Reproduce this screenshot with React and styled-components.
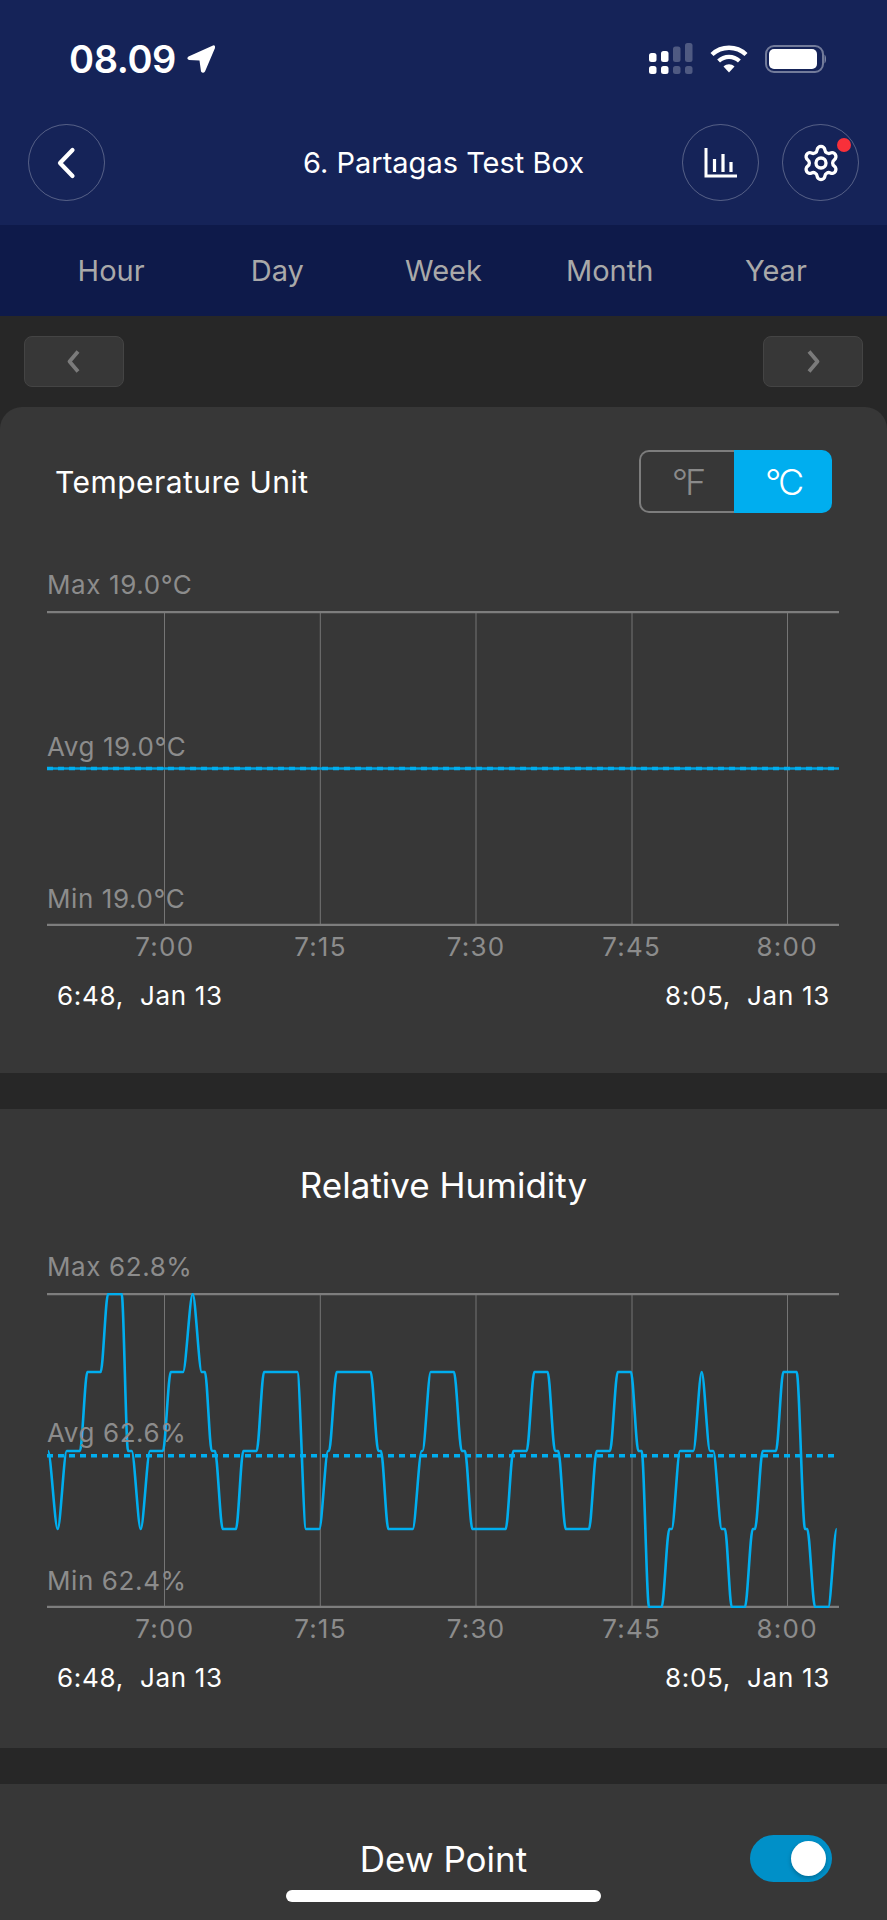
import React from "react"
import styled, { createGlobalStyle } from "styled-components"
import { Settings } from "lucide-react"

const GlobalStyle = createGlobalStyle`
html, body {
  margin: 0;
  background: #272727;
}
* { box-sizing: border-box; }
`

const Page = styled.div`
  position: relative;
  width: 887px;
  height: 1920px;
  overflow: hidden;
  background: #272727;
  color: #fff;
  font-family: Inter, "Noto Sans", sans-serif;
`

const Header = styled.header`
  background: #152358;
`

const StatusBar = styled.div`
  height: 118px;
  display: flex;
  align-items: center;
  justify-content: space-between;
  padding: 0 60px 0 69px;
`

const Clock = styled.div`
  display: flex;
  align-items: center;
  gap: 10px;
  font-size: 38px;
  font-weight: 600;
  letter-spacing: -0.4px;
`

const StatusIcons = styled.div`
  display: flex;
  align-items: center;
  gap: 17px;
`

const TitleRow = styled.div`
  display: grid;
  grid-template-columns: 1fr auto 1fr;
  align-items: center;
  padding: 6px 28px 24px;
`

const Title = styled.h1`
  margin: 0;
  font-size: 29px;
  font-weight: 400;
`

const RoundGroup = styled.div`
  display: flex;
  justify-content: flex-end;
  gap: 23px;
`

const RoundBtn = styled.button`
  position: relative;
  width: 77px;
  height: 77px;
  padding: 0;
  display: flex;
  align-items: center;
  justify-content: center;
  color: #fff;
  background: transparent;
  border: 1.5px solid rgba(255, 255, 255, 0.28);
  border-radius: 50%;
`

const RedDot = styled.span`
  position: absolute;
  top: 13px;
  right: 7px;
  width: 14px;
  height: 14px;
  border-radius: 50%;
  background: #f8303a;
`

const Tabs = styled.nav`
  height: 91px;
  display: grid;
  grid-template-columns: repeat(5, 1fr);
  align-items: center;
  padding: 0 28px;
  background: #0e1a4a;
`

const Tab = styled.div`
  text-align: center;
  font-size: 29px;
  color: #a9a9a9;
`

const Pager = styled.div`
  display: flex;
  justify-content: space-between;
  padding: 20px 24px;
`

const PagerBtn = styled.button`
  width: 100px;
  height: 51px;
  padding: 0;
  display: flex;
  align-items: center;
  justify-content: center;
  color: #7b7b7b;
  background: #373737;
  border: 1px solid #444;
  border-radius: 8px;
`

const Card = styled.section`
  background: #373737;
  padding: ${(p) => p.$pad};
  border-radius: ${(p) => (p.$rounded ? "22px 22px 0 0" : "0")};
  margin-bottom: 36px;
`

const CardHead = styled.div`
  display: flex;
  align-items: center;
  justify-content: space-between;
  height: 63px;
  padding: 0 55px;
`

const HeadText = styled.div`
  font-size: 30px;
  letter-spacing: 0.45px;
`

const UnitSwitch = styled.div`
  width: 193px;
  height: 63px;
  display: flex;
`

const UnitOption = styled.div`
  display: flex;
  align-items: center;
  justify-content: center;
  flex: ${(p) => (p.$on ? "1" : "0 0 95px")};
  font-size: 36px;
  font-weight: 300;
  letter-spacing: -3px;
  color: ${(p) => (p.$on ? "#fff" : "#8a8a8a")};
  background: ${(p) => (p.$on ? "#00aeef" : "transparent")};
  border: ${(p) => (p.$on ? "0" : "2px solid #7d7d7d")};
  border-right: 0;
  border-radius: ${(p) => (p.$on ? "0 10px 10px 0" : "10px 0 0 10px")};
`

const CenterTitle = styled.h2`
  margin: 0;
  text-align: center;
  font-size: 35px;
  font-weight: 400;
  line-height: 40px;
`

const ChartBlock = styled.div`
  margin: ${(p) => p.$top} 48px 0 47px;
`

const MaxLabel = styled.div`
  height: 41px;
  font-size: 26px;
  letter-spacing: 0.6px;
  line-height: 30px;
  color: #8c8c8c;
`

const Plot = styled.div`
  position: relative;
  height: 315px;

  svg {
    display: block;
  }
`

const PlotLabel = styled.span`
  position: absolute;
  left: 0;
  top: ${(p) => p.$y}px;
  font-size: 26px;
  letter-spacing: 0.6px;
  line-height: 30px;
  color: #8c8c8c;
`

const TimeAxis = styled.div`
  display: flex;
  margin-top: 6px;
  padding-left: 40px;
`

const TimeTick = styled.div`
  flex: none;
  width: 155.6px;
  text-align: center;
  font-size: 26px;
  letter-spacing: 1.2px;
  line-height: 30px;
  color: #8c8c8c;
`

const DateRow = styled.div`
  display: flex;
  justify-content: space-between;
  margin-top: 19px;
  padding: 0 9px 0 10px;
  font-size: 26px;
  letter-spacing: 0.7px;
  line-height: 30px;
  white-space: pre;
`

const DewRow = styled.div`
  display: grid;
  grid-template-columns: 1fr auto 1fr;
  align-items: center;
  padding: 0 55px;
`

const Switch = styled.div`
  justify-self: end;
  width: 82px;
  height: 47px;
  display: flex;
  align-items: center;
  justify-content: flex-end;
  padding-right: 6px;
  background: #0090c8;
  border-radius: 24px;
`

const Knob = styled.span`
  width: 35px;
  height: 35px;
  border-radius: 50%;
  background: #fff;
  box-shadow: 0 2px 4px rgba(0, 0, 0, 0.25);
`

const HomeBar = styled.div`
  position: absolute;
  left: 286px;
  top: 1890px;
  width: 315px;
  height: 12px;
  border-radius: 6px;
  background: #fff;
`

const GRID_X = [117.5, 273.3, 429, 585, 740.5]
const TIMES = ["7:00", "7:15", "7:30", "7:45", "8:00"]

// wave levels, y inside the plot
const L = [1, 79, 158, 236, 314]

// [x on the page, level]
const HUMIDITY = [
  [48, 2], [57.7, 3], [66.7, 2], [80, 2], [87.3, 1], [100.7, 1], [108, 0], [121.7, 0],
  [128, 2], [131.7, 2], [140.7, 3], [150, 2], [163, 2], [170.7, 1], [183, 1], [192.7, 0],
  [201.7, 1], [205, 1], [211.7, 2], [215, 2], [222.7, 3], [236, 3], [243.3, 2], [256.7, 2],
  [264, 1], [297.3, 1], [306, 3], [319.3, 3], [328, 2], [329, 2], [336.7, 1], [370.7, 1],
  [378.3, 2], [381, 2], [388.3, 3], [412.7, 3], [421.7, 2], [422.5, 2], [430.7, 1], [454, 1],
  [461.7, 2], [465, 2], [472.3, 3], [505.7, 3], [513.3, 2], [526.7, 2], [534.3, 1], [547.7, 1],
  [555, 2], [558.3, 2], [565.7, 3], [589, 3], [596.7, 2], [610, 2], [617.7, 1], [631, 1],
  [638.3, 2], [641.7, 2], [649, 4], [661.7, 4], [669.3, 3], [671.7, 3], [680, 2], [693.3, 2],
  [701.7, 1], [710, 2], [713.3, 2], [721.7, 3], [725, 3], [731.7, 4], [745, 4], [752.7, 3],
  [755, 3], [762.7, 2], [776, 2], [783.3, 1], [796.7, 1], [805, 3], [807.3, 3], [815, 4],
  [828.3, 4], [836.7, 3],
]

const wavePath = (points) => {
  let d = ""
  points.forEach(([px, level], i) => {
    const x = px - 47
    const y = L[level]
    if (i === 0) {
      d = `M${x} ${y}`
      return
    }
    const prevX = points[i - 1][0] - 47
    const prevY = L[points[i - 1][1]]
    if (prevY === y) {
      d += ` L${x} ${y}`
    } else {
      const k = (x - prevX) * 0.3
      d += ` C${prevX + k} ${prevY} ${x - k} ${y} ${x} ${y}`
    }
  })
  return d
}

const ChartDrawing = ({ avgY, wave }) => (
  <svg width="792" height="315" viewBox="0 0 792 315">
    {GRID_X.map((x) => (
      <line key={x} x1={x} x2={x} y1="0" y2="315" stroke="#757575" strokeWidth="1" />
    ))}
    <line x1="0" x2="792" y1="1" y2="1" stroke="#7d7d7d" strokeWidth="2.4" />
    <line x1="0" x2="792" y1="314" y2="314" stroke="#7d7d7d" strokeWidth="2.4" />
    {wave ? (
      <path d={wavePath(wave)} fill="none" stroke="#00aeef" strokeWidth="2.6" strokeLinejoin="round" />
    ) : (
      <line x1="0" x2="792" y1={avgY} y2={avgY} stroke="#00a3df" strokeWidth="2.4" />
    )}
    <line x1="0" x2="792" y1={avgY} y2={avgY} stroke="#00aeef" strokeWidth="3.4" strokeDasharray="6 5" />
  </svg>
)

const Chart = ({ top, max, avg, min, avgY, avgLabelY, wave }) => (
  <ChartBlock $top={top}>
    <MaxLabel>{max}</MaxLabel>
    <Plot>
      <ChartDrawing avgY={avgY} wave={wave} />
      <PlotLabel $y={avgLabelY}>{avg}</PlotLabel>
      <PlotLabel $y={273}>{min}</PlotLabel>
    </Plot>
    <TimeAxis>
      {TIMES.map((t) => (
        <TimeTick key={t}>{t}</TimeTick>
      ))}
    </TimeAxis>
    <DateRow>
      <span>{"6:48,  Jan 13"}</span>
      <span>{"8:05,  Jan 13"}</span>
    </DateRow>
  </ChartBlock>
)

const LocationArrow = () => (
  <svg width="30" height="30" viewBox="0 0 30 30">
    <path d="M27 1.5 L2.5 12.5 Q0 14.5 3 16 L13.5 16.5 L15 27.5 Q17 30 19 27.5 L29 4 Q29.5 0.5 27 1.5 Z" fill="#fff" />
  </svg>
)

const SignalIcon = () => (
  <svg width="44" height="32" viewBox="0 0 44 32">
    <rect x="0" y="10" width="7.5" height="9" rx="2.5" fill="#fff" />
    <rect x="12" y="8" width="7.5" height="11" rx="2.5" fill="#fff" />
    <rect x="24" y="3.5" width="7.5" height="15.5" rx="2.5" fill="#fff" opacity="0.25" />
    <rect x="36" y="0" width="7.5" height="19" rx="2.5" fill="#fff" opacity="0.25" />
    <rect x="0" y="23" width="7.5" height="8" rx="2.5" fill="#fff" />
    <rect x="12" y="23" width="7.5" height="8" rx="2.5" fill="#fff" />
    <rect x="24" y="23" width="7.5" height="8" rx="2.5" fill="#fff" opacity="0.25" />
    <rect x="36" y="23" width="7.5" height="8" rx="2.5" fill="#fff" opacity="0.25" />
  </svg>
)

const WifiIcon = () => (
  <svg width="38" height="28" viewBox="0 0 38 28">
    <path d="M2 9.5 C11.5 0.5 26.5 0.5 36 9.5" fill="none" stroke="#fff" strokeWidth="4.4" />
    <path d="M8.6 16 C14.5 10.5 23.5 10.5 29.4 16" fill="none" stroke="#fff" strokeWidth="4.2" />
    <path d="M13.5 21.4 C16.8 18.6 21.2 18.6 24.5 21.4 L19 27.6 Z" fill="#fff" />
  </svg>
)

const BatteryIcon = () => (
  <svg width="62" height="28" viewBox="0 0 62 28">
    <rect x="1" y="1" width="57" height="26" rx="8" fill="none" stroke="#fff" strokeOpacity="0.4" strokeWidth="2" />
    <rect x="4" y="4" width="48" height="20" rx="5" fill="#fff" />
    <path d="M59.5 9.5 C61.5 10.5 61.5 17.5 59.5 18.5 Z" fill="#fff" fillOpacity="0.45" />
  </svg>
)

const BackChevron = () => (
  <svg width="22" height="32" viewBox="0 0 22 32">
    <path d="M16.5 3 L4 16 L16.5 29" fill="none" stroke="#fff" strokeWidth="4.2" strokeLinecap="round" strokeLinejoin="round" />
  </svg>
)

const StatsIcon = () => (
  <svg width="34" height="30" viewBox="0 0 34 30">
    <path d="M2 0 V28 H33" fill="none" stroke="#fff" strokeWidth="3" />
    <path d="M10.5 11 V24 M19 6 V24 M27 14 V24" fill="none" stroke="#fff" strokeWidth="3.2" />
  </svg>
)

const PagerChevron = ({ flip }) => (
  <svg width="16" height="25" viewBox="0 0 16 25">
    <path
      d={flip ? "M4 2.5 L12.5 12.5 L4 22.5" : "M12 2.5 L3.5 12.5 L12 22.5"}
      fill="none"
      stroke="currentColor"
      strokeWidth="3.8"
      strokeLinejoin="round"
    />
  </svg>
)

const App = () => (
  <Page>
    <GlobalStyle />
    <Header>
      <StatusBar>
        <Clock>
          08.09
          <LocationArrow />
        </Clock>
        <StatusIcons>
          <SignalIcon />
          <WifiIcon />
          <BatteryIcon />
        </StatusIcons>
      </StatusBar>
      <TitleRow>
        <RoundBtn>
          <BackChevron />
        </RoundBtn>
        <Title>6. Partagas Test Box</Title>
        <RoundGroup>
          <RoundBtn>
            <StatsIcon />
          </RoundBtn>
          <RoundBtn>
            <Settings size={40} strokeWidth={2} />
            <RedDot />
          </RoundBtn>
        </RoundGroup>
      </TitleRow>
    </Header>
    <Tabs>
      {["Hour", "Day", "Week", "Month", "Year"].map((t) => (
        <Tab key={t}>{t}</Tab>
      ))}
    </Tabs>
    <Pager>
      <PagerBtn>
        <PagerChevron />
      </PagerBtn>
      <PagerBtn>
        <PagerChevron flip />
      </PagerBtn>
    </Pager>

    <Card $rounded $pad="43px 0 62px">
      <CardHead>
        <HeadText>Temperature Unit</HeadText>
        <UnitSwitch>
          <UnitOption>°F</UnitOption>
          <UnitOption $on>°C</UnitOption>
        </UnitSwitch>
      </CardHead>
      <Chart
        top="57px"
        max="Max 19.0°C"
        avg="Avg 19.0°C"
        min="Min 19.0°C"
        avgY={157.5}
        avgLabelY={121}
      />
    </Card>

    <Card $pad="56px 0 55px">
      <CenterTitle>Relative Humidity</CenterTitle>
      <Chart
        top="47px"
        max="Max 62.8%"
        avg="Avg 62.6%"
        min="Min 62.4%"
        avgY={162.7}
        avgLabelY={125}
        wave={HUMIDITY}
      />
    </Card>

    <Card $pad="51px 0 60px">
      <DewRow>
        <span />
        <CenterTitle>Dew Point</CenterTitle>
        <Switch>
          <Knob />
        </Switch>
      </DewRow>
    </Card>
    <HomeBar />
  </Page>
)

export default App
